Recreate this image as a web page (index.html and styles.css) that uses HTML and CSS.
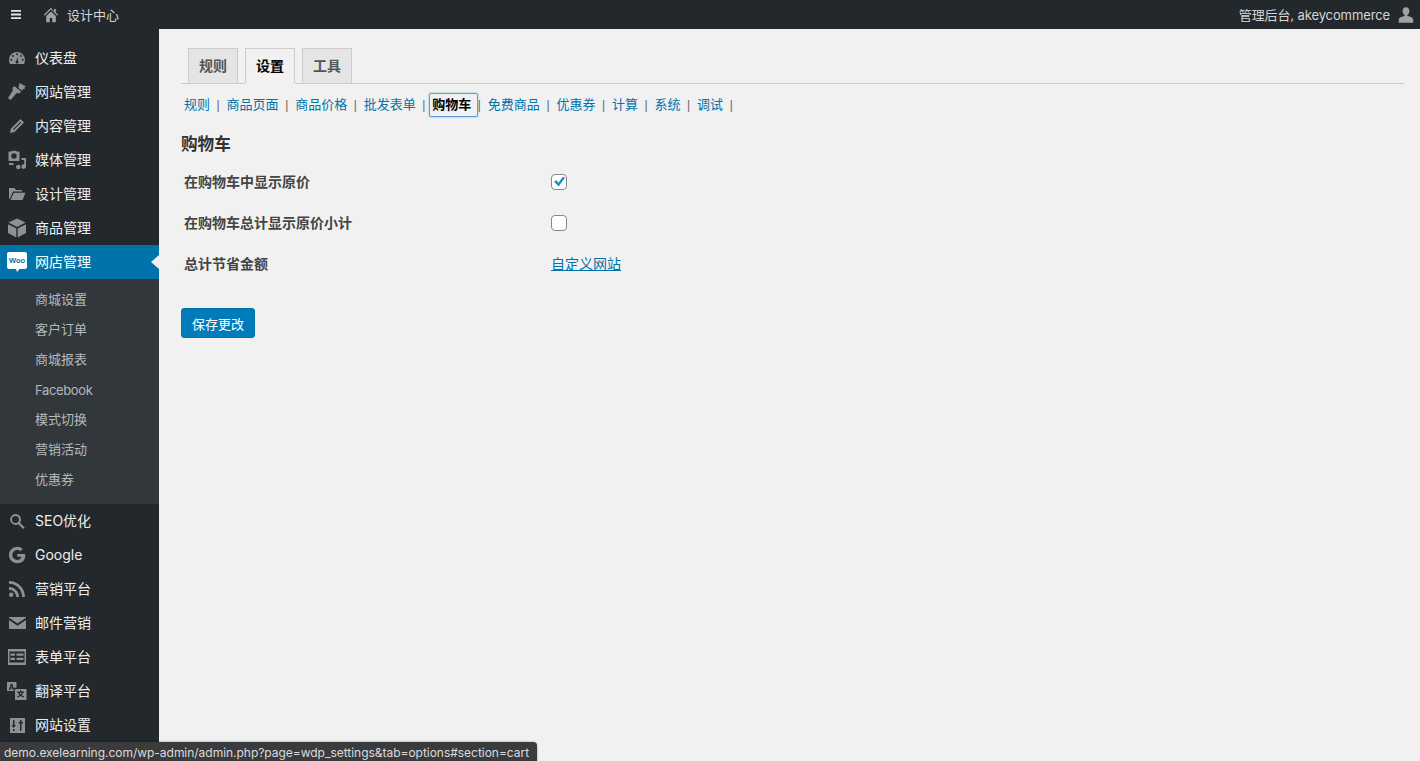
FILE: index.html
```html
<!DOCTYPE html>
<html lang="zh-CN">
<head>
<meta charset="utf-8">
<title>购物车设置</title>
<link rel="stylesheet" href="styles.css">
</head>
<body>
<header class="topbar">
  <div class="topbar-left">
    <svg class="burger" viewBox="0 0 10 9"><path d="M0 0h10v1.800H0zM0 3.600h10v1.800H0zM0 7.200h10V9H0z"/></svg>
    <svg class="home" viewBox="0 0 20 20"><path d="M10 1 1 9.800l1 1L10 3.200l8 7.600 1-1-3-2.900V2.600h-2.400v2.900zM4 11.200V19h4.400v-5.200h3.200V19H16v-7.800l-6-5.700z"/></svg>
    <span class="site">设计中心</span>
  </div>
  <div class="topbar-right">
    <span class="greeting">管理后台, akeycommerce</span>
    <svg class="user" viewBox="0 0 20 20"><path d="M10 1.500c-2.300 0-3.800 1.700-3.800 4 0 1.900.9 3.600 2.300 4.400v1.300c-3 .6-6.500 1.900-6.500 3.900v3.400h16v-3.400c0-2-3.500-3.300-6.500-3.900V9.900c1.400-.8 2.300-2.500 2.300-4.400 0-2.300-1.500-4-3.800-4z"/></svg>
  </div>
</header>
<div class="layout">
  <nav class="sidebar">
    <ul class="menu">
      <li class="item"><svg class="ico" viewBox="0 0 20 20"><path fill-rule="evenodd" d="M10 4a8 8 0 0 0-8 8c0 1.500.4 2.900 1.100 4h13.800c.7-1.100 1.100-2.500 1.100-4a8 8 0 0 0-8-8zM10 5.300a1 1 0 1 1 0 2 1 1 0 0 1 0-2zM6 6.900a1 1 0 1 1 0 2 1 1 0 0 1 0-2zM14 6.900a1 1 0 1 1 0 2 1 1 0 0 1 0-2zM4.300 10.800a1 1 0 1 1 0 2 1 1 0 0 1 0-2zM15.700 10.800a1 1 0 1 1 0 2 1 1 0 0 1 0-2zM11 8.500l-.3 4.200a1.500 1.500 0 1 1-1.400 0z"/></svg><span>仪表盘</span></li>
      <li class="item"><svg class="ico" viewBox="0 0 20 20"><path d="M12.500 1 19 4.500 17.200 5.800 18 7.300l-2-.2-.7 1.600-3.900-2.700zM10.500 6.800l3.500 2.500-1.400 2.200-3-.6-5.900 7.100-2.700-1.900 4.900-7.800-.5-2.600 2.200-1.400z"/></svg><span>网站管理</span></li>
      <li class="item"><svg class="ico" viewBox="0 0 20 20"><path fill-rule="evenodd" d="M13.500 3 17 6.500 7.500 16 3 17l1-4.500zM13.500 5.800 6 13.300l.8.800 7.500-7.500z"/></svg><span>内容管理</span></li>
      <li class="item"><svg class="ico" viewBox="0 0 20 20"><path fill-rule="evenodd" d="M2.500 1.500h2L5.500.8h3l1 .7h2c.6 0 1 .4 1 1v7.500c0 .6-.4 1-1 1h-9c-.6 0-1-.4-1-1V2.500c0-.6.4-1 1-1zM7 3.300a2.700 2.700 0 1 0 0 5.400 2.700 2.700 0 0 0 0-5.400zM14.500 8H19v8.500a2.300 2.300 0 1 1-1.800-2.200V10h-2.700zM11.300 14.800a2.200 2.200 0 1 1 0 4.400 2.200 2.200 0 0 1 0-4.400zM2 13h4.500v2H2z"/></svg><span>媒体管理</span></li>
      <li class="item"><svg class="ico" viewBox="0 0 20 20"><path d="M2 4h5.500L9 6h6v1.500H6L3 14.500 2 15zM6.800 8.800H18.500L15.500 16H3.500z"/></svg><span>设计管理</span></li>
      <li class="item"><svg class="ico" viewBox="0 0 20 20"><path d="M10 .5 18.500 4.500 10 9 1.500 4.500zM1 6.300l8.300 4.300v9L1 15zM19 6.300V15l-8.300 4.600v-9z"/></svg><span>商品管理</span></li>
      <li class="item active"><svg class="ico woo" viewBox="0 0 20 20"><path d="M2 0h16c1.100 0 2 .9 2 2v13c0 1.100-.9 2-2 2h-5.500L10 20l-1-3H2c-1.100 0-2-.9-2-2V2C0 .9.900 0 2 0z"/><text x="10" y="11" text-anchor="middle" class="woo-text">Woo</text></svg><span>网店管理</span></li>
      <li class="submenu">
        <a>商城设置</a><a>客户订单</a><a>商城报表</a><a class="latin">Facebook</a><a>模式切换</a><a>营销活动</a><a>优惠券</a>
      </li>
      <li class="item"><svg class="ico" viewBox="0 0 20 20"><path fill-rule="evenodd" d="M8.500 3a5.500 5.500 0 0 1 4.500 8.700l4.700 4.700-1.600 1.600-4.700-4.700A5.500 5.500 0 1 1 8.500 3zM8.500 5a3.500 3.500 0 1 0 0 7 3.500 3.500 0 0 0 0-7z"/></svg><span>SEO优化</span></li>
      <li class="item"><svg class="ico" viewBox="0 0 20 20"><path d="M10.200 1.800c2.200 0 4.100.8 5.600 2.200L13.400 6.300c-.8-.7-1.900-1.200-3.200-1.200-2.700 0-4.900 2.200-4.900 4.900s2.200 4.900 4.900 4.900c2.300 0 3.900-1.200 4.300-3.100h-4.300V9h7.900c.1.500.2 1 .2 1.700 0 4.500-3.200 7.500-8 7.500C5.700 18.200 2 14.500 2 10s3.700-8.200 8.200-8.200z"/></svg><span>Google</span></li>
      <li class="item"><svg class="ico" viewBox="0 0 20 20"><path d="M2 2c8.800 0 16 7.200 16 16h-2.800C15.200 10.700 9.300 4.800 2 4.800zM2 8c5.500 0 10 4.500 10 10H9.200c0-4-3.200-7.200-7.200-7.200zM4.200 13.600a2.200 2.200 0 1 1 0 4.400 2.200 2.200 0 0 1 0-4.400z"/></svg><span>营销平台</span></li>
      <li class="item"><svg class="ico" viewBox="0 0 20 20"><path d="M2 4h17v.8L10.500 10.500 2 4.800zM2 7l8.500 5.700L19 7v9H2z"/></svg><span>邮件营销</span></li>
      <li class="item"><svg class="ico" viewBox="0 0 20 20"><path fill-rule="evenodd" d="M1 2h18v16H1zM2.500 4.500v11h15v-11zM3.500 6.500h4.500v2.300H3.500zM9.500 6.500h7v2.300h-7zM3.500 10.800h4.500v2.300H3.500zM9.500 10.800h7v2.300h-7z"/></svg><span>表单平台</span></li>
      <li class="item"><svg class="ico" viewBox="0 0 20 20"><path fill-rule="evenodd" d="M1 1h7.500c.6 0 1 .4 1 1v4.500H8.500c-.8 0-1.500.7-1.500 1.500v2H1c-.6 0-1-.4-1-1V2c0-.6.4-1 1-1zM3.800 2.700 1.800 9h1.500l.4-1.400h1.700L5.800 9h1.500L5.400 2.700zM4.500 4.500l.6 2H3.900zM9 8h9.500c.6 0 1 .4 1 1v9c0 .6-.4 1-1 1H9c-.6 0-1-.4-1-1V9c0-.6.4-1 1-1zM13 9.200v1.300h-2.800v1.200h1c.3 1 .8 1.800 1.400 2.500-.7.500-1.500.8-2.400 1l.5 1.200c1.100-.3 2.100-.7 2.900-1.300.8.600 1.800 1 2.900 1.300l.5-1.200c-.9-.2-1.700-.5-2.400-1 .6-.7 1.100-1.500 1.400-2.500h1v-1.200h-2.800V9.200zM12.500 11.700h2.400c-.2.600-.6 1.100-1.200 1.600-.6-.5-1-1-1.200-1.600z"/></svg><span>翻译平台</span></li>
      <li class="item"><svg class="ico" viewBox="0 0 20 20"><path fill-rule="evenodd" d="M3 3h15v15H3zM6 5v5H4.500l2.200 3 2.200-3H7.500V5zM13 5v2h-1.500v1.500H13V16h1.500V8.500H16V7h-1.500V5zM6 14v2h1.500v-2z"/></svg><span>网站设置</span></li>
    </ul>
  </nav>
  <main class="content">
    <div class="tabs">
      <a class="tab">规则</a>
      <a class="tab tab-on">设置</a>
      <a class="tab">工具</a>
    </div>
    <ul class="subnav">
      <li><a>规则</a><i>|</i></li>
      <li><a>商品页面</a><i>|</i></li>
      <li><a>商品价格</a><i>|</i></li>
      <li><a>批发表单</a><i>|</i></li>
      <li><a class="current">购物车</a><i>|</i></li>
      <li><a>免费商品</a><i>|</i></li>
      <li><a>优惠券</a><i>|</i></li>
      <li><a>计算</a><i>|</i></li>
      <li><a>系统</a><i>|</i></li>
      <li><a>调试</a><i>|</i></li>
    </ul>
    <h2 class="title">购物车</h2>
    <form class="form">
      <div class="row"><label class="label">在购物车中显示原价</label><input class="check" type="checkbox" checked></div>
      <div class="row"><label class="label">在购物车总计显示原价小计</label><input class="check" type="checkbox"></div>
      <div class="row"><label class="label">总计节省金额</label><a class="link">自定义网站</a></div>
      <button class="save" type="button">保存更改</button>
    </form>
  </main>
</div>
<div class="status">demo.exelearning.com/wp-admin/admin.php?page=wdp_settings&amp;tab=options#section=cart</div>
</body>
</html>
```
FILE: styles.css
```css
* { box-sizing: border-box; }
html, body { margin: 0; height: 761px; overflow: hidden; }
body {
  position: relative;
  background: #f1f1f1;
  font-family: Inter, "Noto Sans CJK SC", sans-serif;
  font-size: 13px;
  color: #444;
}
ul { list-style: none; margin: 0; padding: 0; }

.topbar {
  height: 29px;
  background: #23282d;
  color: #d5d6d7;
  display: flex;
  justify-content: space-between;
  align-items: center;
}
.topbar-left { display: flex; align-items: center; padding-left: 11px; }
.burger { width: 10px; height: 9px; fill: #e4e5e6; }
.home { width: 16px; height: 16px; fill: #9ea3a8; margin-left: 22px; }
.site { margin-left: 8px; font-size: 13px; }
.topbar-right { display: flex; align-items: center; font-size: 13px; padding-right: 5px; }
.greeting { letter-spacing: -.11px; }
.user { width: 18px; height: 18px; fill: #9ea3a8; margin-left: 7px; }

.layout { display: flex; height: 732px; }
.sidebar { width: 159px; flex: none; background: #23282d; padding-top: 12px; }
.item {
  height: 34px;
  display: flex;
  align-items: center;
  color: #eee;
  font-size: 14px;
}
.item > span { padding-bottom: 2px; }
.ico { width: 20px; height: 20px; fill: #8d9196; margin: 0 8px 0 7px; flex: none; }
.woo { fill: #fff; }
.woo-text { font: 700 7.500px "Liberation Sans", sans-serif; fill: #0073aa; }
.active { position: relative; background: #0073aa; color: #fff; }
.active::after {
  content: "";
  position: absolute;
  right: 0;
  top: 10px;
  border: 7px solid transparent;
  border-left-width: 0;
  border-right: 8px solid #f1f1f1;
}
.submenu {
  background: #32373c;
  height: 225px;
  padding: 6px 0;
  display: flex;
  flex-direction: column;
}
.submenu a {
  height: 30px;
  line-height: 28px;
  padding-left: 35px;
  color: #b4b9be;
  font-size: 13px;
}
.submenu .latin { line-height: 30px; letter-spacing: -.35px; }

.content { flex: 1; padding: 19px 16px 0 22px; }
.tabs {
  display: flex;
  gap: 7px;
  padding-left: 7px;
  height: 36px;
  border-bottom: 1px solid #ccc;
}
.tab {
  width: 50px;
  height: 36px;
  border: 1px solid #ccc;
  border-bottom: 1px solid #ccc;
  background: #e5e5e5;
  color: #555;
  font-size: 14px;
  font-weight: 700;
  line-height: 33px;
  text-align: center;
}
.tab-on { background: #f1f1f1; border-bottom-color: #f1f1f1; color: #000; }

.subnav { display: flex; margin-top: 9px; height: 24px; align-items: center; }
.subnav li { display: flex; align-items: center; }
.subnav a {
  color: #0073aa;
  font-size: 13px;
  line-height: 18px;
  padding: 2px 6.560px 4px 3px;
}
.subnav i {
  width: 7px;
  font-family: "Liberation Sans", sans-serif;
  font-style: normal;
  color: #666;
  font-size: 12px;
}
.subnav .current {
  color: #000;
  font-weight: 700;
  border-radius: 2px;
  box-shadow: inset 0 0 0 1px #5b9dd9, 0 0 2px rgba(30, 140, 190, .6);
}

.title {
  margin: 16px 0 0;
  font-size: 16.600px;
  line-height: 22px;
  font-weight: 700;
  color: #333;
}
.form { margin-top: 6px; }
.row { height: 41px; display: flex; align-items: center; }
.label { width: 370px; padding: 0 0 2px 3px; font-size: 14px; font-weight: 700; color: #444; }
.check {
  appearance: none;
  width: 16px;
  height: 16px;
  margin: 0;
  background: #fff;
  border: 1px solid #7e8993;
  border-radius: 4px;
  position: relative;
}
.check:checked::before {
  content: "";
  position: absolute;
  left: 2px;
  top: 2px;
  width: 11px;
  height: 10px;
  background: #1e8cbe;
  clip-path: polygon(0 50%, 22% 38%, 40% 62%, 82% 0, 100% 12%, 42% 100%);
}
.link { color: #0073aa; text-decoration: underline; font-size: 14px; padding-bottom: 2px; }
.save {
  display: block;
  margin-top: 24px;
  width: 74px;
  height: 30px;
  border: 1px solid #0073aa;
  border-radius: 3px;
  background: #007cba;
  color: #fff;
  font: 13px Inter, "Noto Sans CJK SC", sans-serif;
  padding: 0;
}

.status {
  position: absolute;
  left: 0;
  bottom: 0;
  width: 537px;
  height: 19px;
  background: #3a3b3d;
  color: #dcdcdc;
  font-size: 12px;
  letter-spacing: -.025px;
  line-height: 21px;
  padding-left: 4px;
  border-top-right-radius: 4px;
  box-shadow: 0 0 2px rgba(0, 0, 0, .5);
}
```
